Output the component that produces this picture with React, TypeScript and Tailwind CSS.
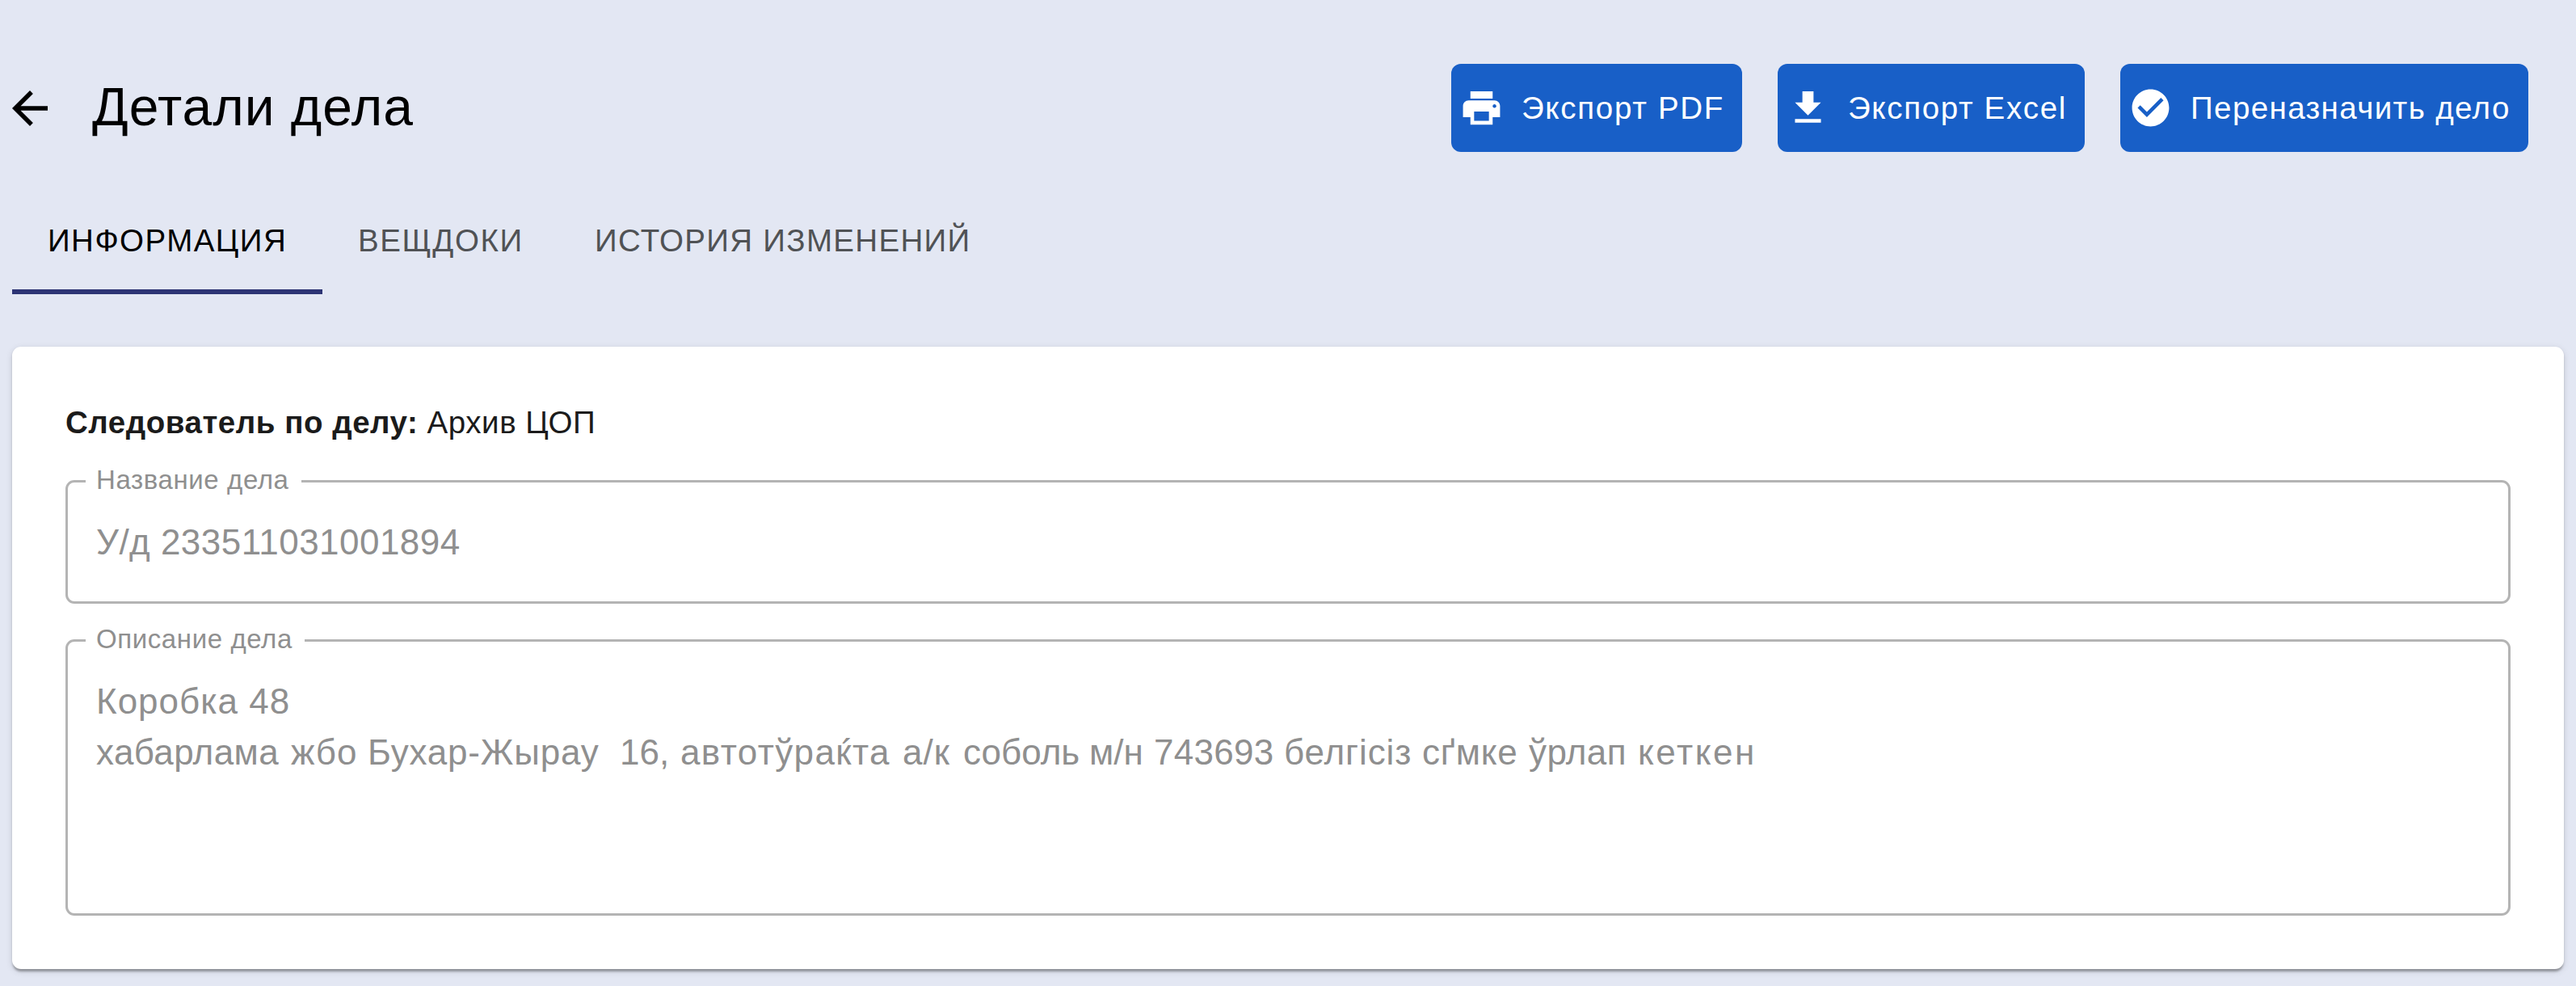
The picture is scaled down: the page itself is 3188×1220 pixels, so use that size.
import type { ReactNode } from "react";

function Icon({ d, className }: { d: string; className: string }) {
  return (
    <svg viewBox="0 0 24 24" fill="currentColor" className={className} aria-hidden="true">
      <path d={d} />
    </svg>
  );
}

const icons = {
  back: "M20 11H7.83l5.59-5.59L12 4l-8 8 8 8 1.41-1.41L7.83 13H20v-2z",
  print:
    "M19 8H5c-1.66 0-3 1.34-3 3v6h4v4h12v-4h4v-6c0-1.66-1.34-3-3-3zm-3 11H8v-5h8v5zm3-7c-.55 0-1-.45-1-1s.45-1 1-1 1 .45 1 1-.45 1-1 1zm-1-9H6v4h12V3z",
  download: "M19 9h-4V3H9v6H5l7 7 7-7zM5 18v2h14v-2H5z",
  check:
    "M12 2C6.48 2 2 6.48 2 12s4.48 10 10 10 10-4.48 10-10S17.52 2 12 2zm-2 15l-5-5 1.41-1.41L10 14.17l7.59-7.59L19 8l-9 9z",
};

const descriptionWords = [
  { text: "хабарлама ", className: "w-[241px] tracking-[0.4px]" },
  { text: "жбо ", className: "w-[95px] tracking-[0.9px]" },
  { text: "Бухар-Жырау  ", className: "w-[312px] tracking-[0.8px]" },
  { text: "16, ", className: "w-[75px]" },
  { text: "автотўраќта ", className: "w-[275px] tracking-[1.4px]" },
  { text: "а/к ", className: "w-[75px] tracking-[1px]" },
  { text: "соболь ", className: "w-[156px]" },
  { text: "м/н ", className: "w-[80px]" },
  { text: "743693 ", className: "w-[161px] tracking-[0.3px]" },
  { text: "белгісіз ", className: "w-[171px] tracking-[0.9px]" },
  { text: "сґмке ", className: "w-[132px] tracking-[0.8px]" },
  { text: "ўрлап ", className: "w-[135px] tracking-[0.4px]" },
  { text: "кеткен", className: "tracking-[2.6px]" },
];

function ActionButton({ icon, width, children }: { icon: string; width: string; children: ReactNode }) {
  return (
    <button
      className={`flex h-[109px] shrink-0 items-center gap-[22px] rounded-[12px] bg-[#185fc7] pl-[10px] text-[38.5px] leading-[64px] whitespace-nowrap text-white ${width}`}
    >
      <Icon d={icon} className="size-[55px] shrink-0" />
      {children}
    </button>
  );
}

function Field({ label, labelWidth, className, children }: { label: ReactNode; labelWidth: string; className: string; children: ReactNode }) {
  return (
    <div className={`relative rounded-[11px] border-[3px] border-[#b4b4b4] pl-[35px] text-[44px] leading-[63.25px] text-[#8f8f8f] ${className}`}>
      <div className={`absolute -top-[23px] left-[22px] bg-white pl-[13px] text-[33px] leading-[40px] tracking-[0.6px] whitespace-nowrap ${labelWidth}`}>
        {label}
      </div>
      {children}
    </div>
  );
}

export default function App() {
  return (
    <div className="h-[1220px] w-[3188px] overflow-hidden bg-[#e3e7f3] pr-[15px] pl-[15px] font-['Liberation_Sans',Arial,sans-serif] text-black">
      <header className="flex h-[188px] items-start pt-[79px] pr-[44px]">
        <div className="flex h-[109px] grow items-center">
          <Icon d={icons.back} className="-ml-[11px] size-[66px]" />
          <h1 className="ml-[44px] pb-[3px] text-[66px] leading-[80px] tracking-[0.95px] whitespace-nowrap">Детали дела</h1>
        </div>
        <div className="flex gap-[44px]">
          <ActionButton icon={icons.print} width="w-[360px]">
            <span className="tracking-[1.7px]">Экспорт PDF</span>
          </ActionButton>
          <ActionButton icon={icons.download} width="w-[380px]">
            <span className="tracking-[1.65px]">Экспорт Excel</span>
          </ActionButton>
          <ActionButton icon={icons.check} width="w-[505px]">
            <span className="tracking-[1.4px]">Переназначить дело</span>
          </ActionButton>
        </div>
      </header>

      <nav className="mt-[44px] flex h-[132px] text-[38.5px] leading-[48px] whitespace-nowrap text-[#505255]">
        <div className="w-[384px] border-b-[6px] border-[#2d3474] pt-[42px] pl-[44px] tracking-[1.45px] text-black">ИНФОРМАЦИЯ</div>
        <div className="w-[293px] pt-[42px] pl-[44px] tracking-[1.6px]">ВЕЩДОКИ</div>
        <div className="pt-[42px] pl-[44px] tracking-[1.32px]">ИСТОРИЯ ИЗМЕНЕНИЙ</div>
      </nav>

      <main className="mt-[65px] h-[770px] rounded-[11px] bg-white px-[66px] pt-[69px] shadow-[0_5.5px_2.75px_-2.75px_rgba(0,0,0,0.2),0_2.75px_2.75px_rgba(0,0,0,0.14),0_2.75px_8.25px_rgba(0,0,0,0.12)]">
        <p className="h-[96px] text-[38.5px] leading-[50px] tracking-[0.53px] whitespace-pre text-[#1b1b1b]">
          <b>Следователь по делу:</b> Архив ЦОП
        </p>
        <Field label="Название дела" labelWidth="w-[267px]" className="h-[153px] pt-[42px]">
          <p className="tracking-[0.46px] whitespace-pre">У/д 233511031001894</p>
        </Field>
        <Field label="Описание дела" labelWidth="w-[271px]" className="mt-[44px] h-[342px] pt-[42px]">
          <p className="tracking-[1px] whitespace-pre">Коробка 48</p>
          <p className="flex whitespace-pre">
            {descriptionWords.map((word) => (
              <span key={word.text} className={`shrink-0 ${word.className}`}>
                {word.text}
              </span>
            ))}
          </p>
        </Field>
      </main>
    </div>
  );
}
